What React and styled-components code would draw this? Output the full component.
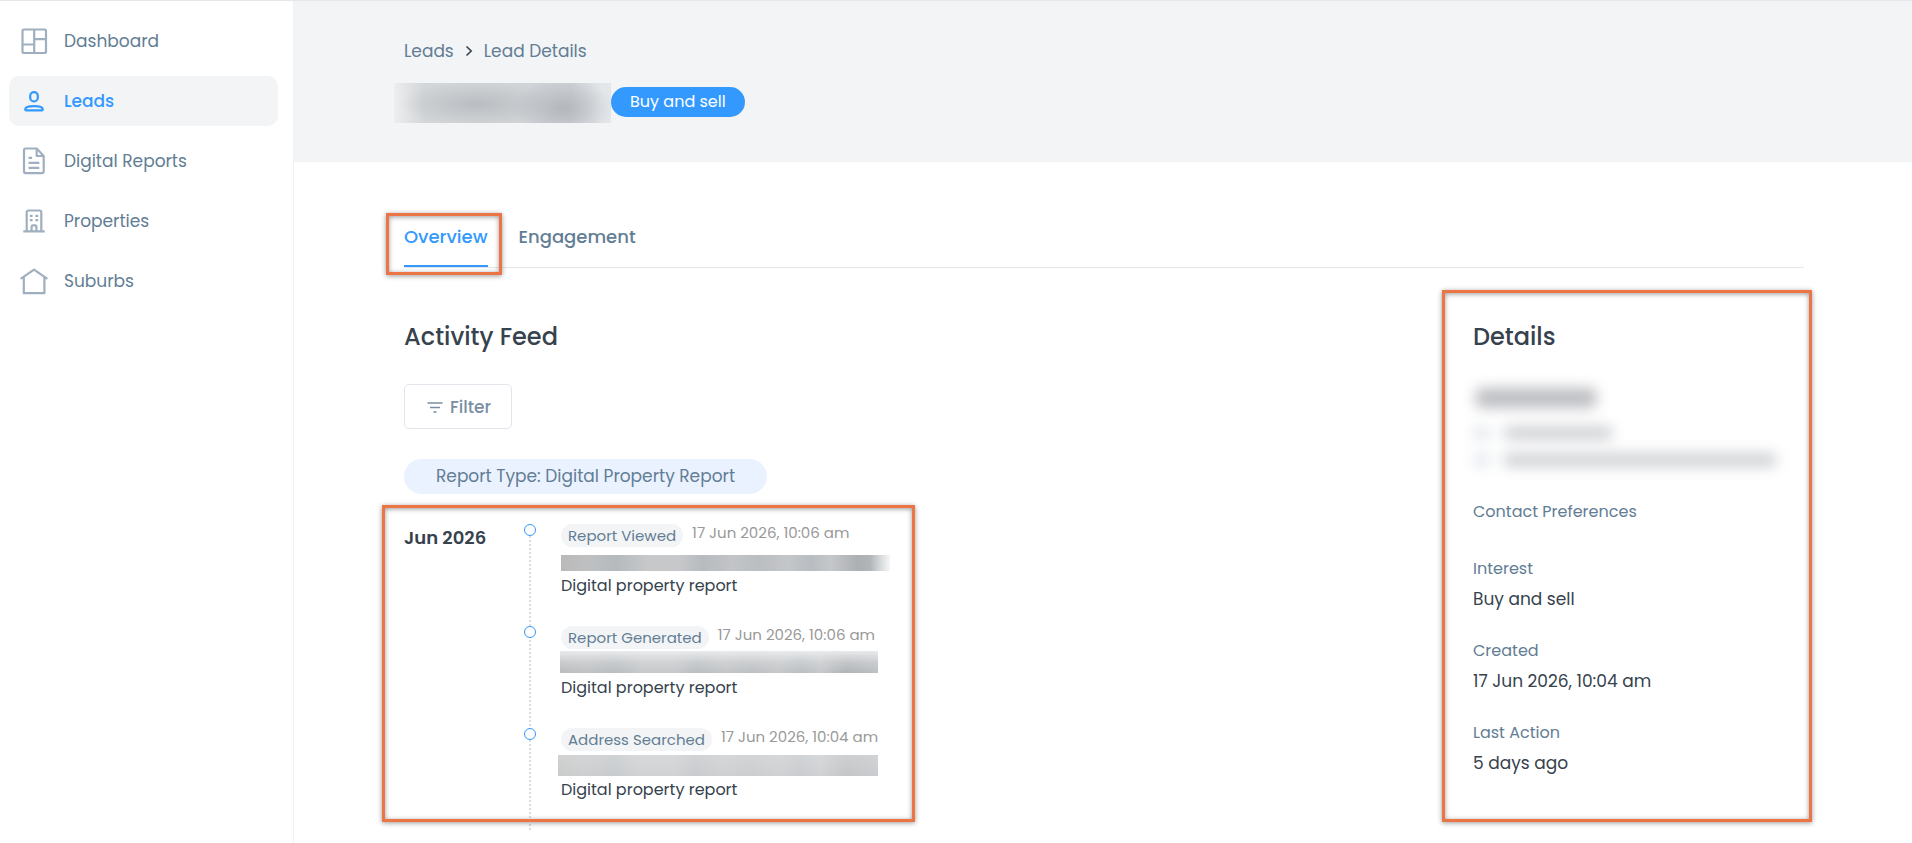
import React from 'react'
import styled, { createGlobalStyle } from "styled-components";

const navItems = [
    { label: "Dashboard", icon: "dashboard" },
    { label: "Leads", icon: "leads", active: true },
    { label: "Digital Reports", icon: "reports" },
    { label: "Properties", icon: "properties" },
    { label: "Suburbs", icon: "suburbs" },
];

const activities = [
    { action: "Report Viewed", date: "17 Jun 2026, 10:06 am", mask: "viewed" },
    { action: "Report Generated", date: "17 Jun 2026, 10:06 am", mask: "generated" },
    { action: "Address Searched", date: "17 Jun 2026, 10:04 am", mask: "searched" },
];

const details = [
    { label: "Contact Preferences" },
    { label: "Interest", value: "Buy and sell" },
    { label: "Created", value: "17 Jun 2026, 10:04 am" },
    { label: "Last Action", value: "5 days ago" },
];

const NavIcon = ({ name }) => (
    <IconSvg viewBox="0 0 30 30" aria-hidden="true">
        {name === "dashboard" && (
            <>
                <rect x="3.5" y="3.5" width="23.5" height="23.5" rx="1.5" />
                <path d="M15.2 4v23M15.2 13.2H27M4 18.5h11.2" />
            </>
        )}
        {name === "leads" && (
            <>
                <rect x="11.2" y="6.2" width="7.6" height="9.2" rx="3.7" />
                <path d="M6.2 23.4c0-2.2 4-3.3 8.8-3.3s8.8 1.1 8.8 3.3c0 .6-.4.9-1 .9H7.2c-.6 0-1-.3-1-.9z" />
            </>
        )}
        {name === "reports" && (
            <>
                <path d="M6.5 2.5h11.2l7 7.4v15.4c0 1.1-.7 1.9-1.8 1.9H6.8c-1.1 0-1.8-.8-1.8-1.9V4.3c0-1.1.6-1.8 1.5-1.8z" />
                <path d="M17.7 3v7h7M9.5 11.8h3.6M9.5 16.9h10.8M9.5 21.9h10.8" />
            </>
        )}
        {name === "properties" && (
            <>
                <path d="M7.7 25V6.3c0-1.2.7-1.8 1.8-1.8h11c1.1 0 1.8.6 1.8 1.8V25M4.3 25.4h21.4" />
                <path d="M12.6 25v-4.4c0-.8.5-1.3 1.3-1.3h2.2c.8 0 1.3.5 1.3 1.3V25" />
                <path d="M10.8 9.8h2.8M16.4 9.8h2.8M10.8 14.2h2.8M16.4 14.2h2.8" />
            </>
        )}
        {name === "suburbs" && (
            <path d="M1.6 12.8L15 3.6l13.4 9.2M4.8 11.2v16h20.6v-16" />
        )}
    </IconSvg>
);

const App = () => {
    return (
        <>
            <GlobalStyle />
            <Shell>
                <Sidebar>
                    {navItems.map((item) => (
                        <NavLink href="#" key={item.label} $active={item.active}>
                            <NavIcon name={item.icon} />
                            {item.label}
                        </NavLink>
                    ))}
                </Sidebar>

                <Main>
                    <Header>
                        <Breadcrumb aria-label="Breadcrumb">
                            <a href="#">Leads</a>
                            <Chevron viewBox="0 0 8 12" aria-hidden="true">
                                <path d="M1.5 1.5L6.2 6l-4.7 4.5" />
                            </Chevron>
                            <a href="#">Lead Details</a>
                        </Breadcrumb>
                        <TitleRow>
                            <LeadName aria-label="Lead name hidden">
                                <NameMask />
                            </LeadName>
                            <InterestBadge>Buy and sell</InterestBadge>
                        </TitleRow>
                    </Header>

                    <Content>
                        <Tabs>
                            <Tab type="button" $active>
                                Overview
                                <TabCallout />
                            </Tab>
                            <Tab type="button">Engagement</Tab>
                        </Tabs>

                        <Columns>
                            <section>
                                <Heading>Activity Feed</Heading>
                                <FilterButton type="button">
                                    <FilterSvg viewBox="0 0 16 12" aria-hidden="true">
                                        <path d="M.5 2h15M3 6.5h10M6.5 11h3" />
                                    </FilterSvg>
                                    Filter
                                </FilterButton>
                                <FilterChip>Report Type: Digital Property Report</FilterChip>

                                <Feed>
                                    <Month>Jun 2026</Month>
                                    <Timeline>
                                        {activities.map((item) => (
                                            <Activity key={item.action}>
                                                <Dot />
                                                <ActivityHead>
                                                    <ActionPill>{item.action}</ActionPill>
                                                    <ActionDate>{item.date}</ActionDate>
                                                </ActivityHead>
                                                <Address>
                                                    <AddressMask $kind={item.mask} />
                                                </Address>
                                                <ReportName>Digital property report</ReportName>
                                            </Activity>
                                        ))}
                                    </Timeline>
                                    <FeedCallout />
                                </Feed>
                            </section>

                            <Details>
                                <Heading>Details</Heading>
                                <Contact aria-label="Contact hidden">
                                    <ContactName />
                                    <ContactLine $width="110px" />
                                    <ContactLine $width="274px" />
                                </Contact>
                                <DetailList>
                                    {details.map((item) => (
                                        <DetailItem key={item.label}>
                                            <dt>{item.label}</dt>
                                            {item.value && <dd>{item.value}</dd>}
                                        </DetailItem>
                                    ))}
                                </DetailList>
                                <DetailsCallout />
                            </Details>
                        </Columns>
                    </Content>
                </Main>
            </Shell>
        </>
    )
}

const GlobalStyle = createGlobalStyle`
* {
box-sizing: border-box;
}
body {
margin: 0;
background: #ffffff;
color: #36424d;
font-family: Poppins, Inter, "Open Sans", sans-serif;
font-size: 17px;
}
a {
color: inherit;
text-decoration: none;
}
button {
font-family: inherit;
cursor: pointer;
}
`;

const Shell = styled.div`
display: flex;
min-height: 100vh;
border-top: 1px solid #e4e7ec;
`;

const Sidebar = styled.nav`
display: flex;
flex-direction: column;
gap: 10px;
flex: 0 0 294px;
padding: 15px 15px 15px 9px;
border-right: 1px solid #f0f1f4;
`;

const NavLink = styled.a`
display: flex;
align-items: center;
gap: 15px;
height: 50px;
padding: 0 10px;
border-radius: 10px;
color: ${(props) => (props.$active ? "#3399ff" : "#627d94")};
background: ${(props) => (props.$active ? "#f2f4f6" : "transparent")};
font-weight: ${(props) => (props.$active ? 500 : 400)};

svg {
stroke: ${(props) => (props.$active ? "#3399ff" : "#a0afbf")};
}
`;

const IconSvg = styled.svg`
width: 30px;
height: 30px;
fill: none;
stroke-width: 2.2;
stroke-linejoin: round;
`;

const Main = styled.main`
flex: 1;
min-width: 0;
`;

const Header = styled.header`
padding: 38px 108px 41px 110px;
background: #f2f4f6;
`;

const Breadcrumb = styled.nav`
display: flex;
align-items: center;
gap: 11px;
color: #627d94;
line-height: 24px;
`;

const Chevron = styled.svg`
width: 8px;
height: 12px;
fill: none;
stroke: #36424d;
stroke-width: 1.6;
`;

const TitleRow = styled.div`
display: flex;
align-items: center;
margin-top: 20px;
`;

const LeadName = styled.h1`
position: relative;
width: 207px;
height: 38px;
margin: 0;
`;

const NameMask = styled.span`
position: absolute;
inset: 0 0 -2px -10px;
background:
radial-gradient(ellipse 50px 30px at 78% 62%, rgba(172, 175, 181, 0.8) 0%, rgba(178, 181, 186, 0) 100%),
radial-gradient(ellipse 76px 22px at 38% 52%, rgba(180, 183, 187, 0.8) 0%, rgba(185, 188, 192, 0) 100%),
linear-gradient(90deg, #eceeef 0%, #e3e5e7 5%, #d3d6d9 14%, #d0d3d6 82%, #e4e7ea 96%);
`;

const InterestBadge = styled.span`
padding: 0 19px;
border-radius: 15px;
background: #3399ff;
color: #ffffff;
font-size: 16px;
line-height: 30px;
`;

const Content = styled.div`
padding: 60px 108px 0 110px;
`;

const Tabs = styled.div`
display: flex;
gap: 31px;
border-bottom: 1px solid #e4e6ea;
`;

const Tab = styled.button`
position: relative;
padding: 0 0 13px;
border: 0;
border-bottom: 2px solid ${(props) => (props.$active ? "#3399ff" : "transparent")};
background: none;
color: ${(props) => (props.$active ? "#3399ff" : "#627d94")};
font-size: 18px;
font-weight: 500;
line-height: 30px;
`;

/* orange frames drawn over the page */
const Callout = styled.div`
position: absolute;
border: 3px solid #ec7546;
box-shadow: 0 1px 5px rgba(0, 0, 0, 0.4), inset 0 1px 5px rgba(0, 0, 0, 0.4);
pointer-events: none;
`;

const TabCallout = styled(Callout)`
inset: -9px -14px -10px -18px;
`;

const FeedCallout = styled(Callout)`
top: -19px;
bottom: 8px;
left: -22px;
width: 533px;
`;

const DetailsCallout = styled(Callout)`
inset: -28px -8px -47px -31px;
`;

const Columns = styled.div`
display: grid;
grid-template-columns: minmax(0, 1fr) 331px;
align-items: start;
padding-top: 50px;
`;

const Heading = styled.h2`
margin: 0 0 28px;
font-size: 24px;
font-weight: 500;
line-height: 38px;
`;

const FilterButton = styled.button`
display: flex;
align-items: center;
gap: 7px;
height: 45px;
padding: 0 20px 0 22px;
border: 1px solid #e2e5ec;
border-radius: 5px;
background: #ffffff;
color: #7a8fa3;
font-size: 17px;
font-weight: 500;
`;

const FilterSvg = styled.svg`
width: 16px;
height: 12px;
fill: none;
stroke: #7a8fa3;
stroke-width: 1.6;
`;

const FilterChip = styled.div`
width: fit-content;
margin-top: 30px;
padding: 0 32px;
border-radius: 18px;
background: #ebf2ff;
color: #627d94;
line-height: 35px;
`;

const Feed = styled.div`
position: relative;
display: flex;
margin-top: 30px;
`;

const Month = styled.h3`
flex: 0 0 120px;
margin: 0;
font-size: 18px;
font-weight: 600;
line-height: 28px;
`;

const Timeline = styled.ul`
margin: 0;
padding: 0;
list-style: none;
background: repeating-linear-gradient(#d9dce4 0 2px, transparent 2px 4px) 5px 0 / 2px 100% no-repeat;
`;

const Activity = styled.li`
position: relative;
padding: 0 0 28px 37px;
`;

const Dot = styled.span`
position: absolute;
top: 0;
left: 0;
width: 12px;
height: 12px;
border: 1px solid #3399ff;
border-radius: 50%;
background: #ffffff;
`;

const ActivityHead = styled.div`
display: flex;
align-items: flex-start;
gap: 9px;
`;

const ActionPill = styled.span`
padding: 0 7px;
border-radius: 12px;
background: #f2f4f6;
color: #627d94;
font-size: 15px;
line-height: 23px;
`;

const ActionDate = styled.time`
color: #999999;
font-size: 15px;
line-height: 18px;
`;

const Address = styled.div`
position: relative;
height: 26px;
`;

const maskBoxes = {
    viewed: "top: 8px; left: 0; width: 329px; height: 16px;",
    generated: "top: 2px; left: -1px; width: 318px; height: 22px;",
    searched: "top: 4px; left: -3px; width: 320px; height: 21px;",
};

const maskShades = {
    viewed: "linear-gradient(90deg, rgba(255, 255, 255, 0) 94%, #f6f7f8 100%)",
    generated: "linear-gradient(rgba(238, 239, 240, 0.9), rgba(220, 222, 224, 0.5) 50%, rgba(200, 202, 204, 0.1))",
    searched: "linear-gradient(rgba(226, 227, 228, 0.6), rgba(222, 223, 224, 0.45))",
};

const AddressMask = styled.span`
position: absolute;
${(props) => maskBoxes[props.$kind]}
background:
${(props) => maskShades[props.$kind]},
linear-gradient(90deg, #b9b9b9, #bfc0c1 8%, #b5babd 17%, #c6c8ca 26%, #c6c8ca 36%, #b7bbbf 43%, #c2c4c6 52%, #bbbec1 60%, #c4c6c8 69%, #b8bdc1 76%, #c5c7ca 82%, #adb0b3 90%, #b9bdc1);
`;

const ReportName = styled.div`
font-size: 16px;
line-height: 25px;
`;

const Details = styled.aside`
position: relative;
`;

const Contact = styled.div`
display: flex;
flex-direction: column;
gap: 13px;
height: 96px;
margin-left: -10px;
padding: 4px 0 0 12px;
clip-path: inset(-20px -20px 0 -20px);
`;

const ContactName = styled.div`
width: 122px;
height: 20px;
margin-bottom: 5px;
border-radius: 8px;
background: #bcbdc1;
filter: blur(7px);
`;

const ContactLine = styled.div`
position: relative;
width: ${(props) => props.$width};
height: 14px;
margin-left: 28px;
border-radius: 8px;
background: #cfd1d4;
filter: blur(7px);

&::before {
content: "";
position: absolute;
top: 0;
left: -29px;
width: 16px;
height: 14px;
background: #e4e9ee;
}
`;

const DetailList = styled.dl`
display: grid;
gap: 29px;
margin: 21px 0 0;
`;

const DetailItem = styled.div`
min-height: 28px;

dt {
color: #627d94;
font-size: 16px;
line-height: 22px;
}
dd {
margin: 7px 0 0;
line-height: 24px;
}
`;


export default App
